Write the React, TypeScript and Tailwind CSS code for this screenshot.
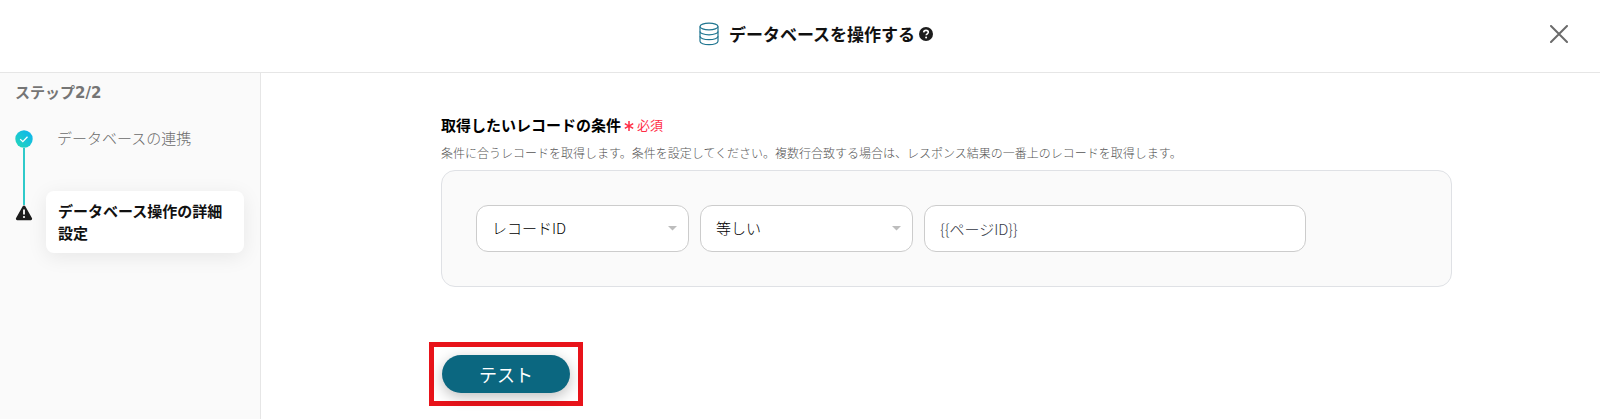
import { useState } from 'react'

const DatabaseIcon = () => (
  <svg width="20" height="24" viewBox="0 0 20 24" fill="none" stroke="#1f7590" strokeWidth="1.2" aria-hidden="true">
    <ellipse cx="10" cy="4.5" rx="9" ry="3.3" />
    <path d="M1 4.5v14.8c0 1.9 4 3.4 9 3.4s9-1.5 9-3.4V4.5" />
    <path d="M1 9.4c0 1.9 4 3.4 9 3.4s9-1.5 9-3.4" />
    <path d="M1 14.3c0 1.9 4 3.4 9 3.4s9-1.5 9-3.4" />
  </svg>
)

const HelpIcon = () => (
  <svg width="14" height="14" viewBox="0 0 14 14" aria-hidden="true">
    <circle cx="7" cy="7" r="7" fill="#1c1c1c" />
    <path d="M4.7 5.4c.1-1.3 1.1-2 2.3-2s2.3.7 2.3 1.9c0 1.5-2.1 1.5-2.1 3" fill="none" stroke="white" strokeWidth="1.6" />
    <circle cx="7.1" cy="10.5" r="1" fill="white" />
  </svg>
)

const CheckIcon = () => (
  <svg width="18" height="18" viewBox="0 0 18 18" aria-hidden="true">
    <defs>
      <linearGradient id="done" x1="0" y1="1" x2="1" y2="0">
        <stop offset="0" stopColor="#25d8b8" />
        <stop offset="1" stopColor="#0cb2f2" />
      </linearGradient>
    </defs>
    <circle cx="9" cy="9" r="8.7" fill="url(#done)" />
    <path d="M5.2 9.1l2.6 2.5 4.7-4.8" fill="none" stroke="white" strokeWidth="1.3" />
  </svg>
)

const WarningIcon = () => (
  <svg width="18" height="16" viewBox="0 0 18 16" aria-hidden="true">
    <path d="M7.7 1.2a1.5 1.5 0 012.6 0l6.6 11.9a1.4 1.4 0 01-1.2 2.1H2.3a1.4 1.4 0 01-1.2-2.1z" fill="#1c1c1c" />
    <path d="M9 4.6v4.9" stroke="white" strokeWidth="1.8" />
    <circle cx="9" cy="12" r="1.1" fill="white" />
  </svg>
)

const RequiredMark = () => (
  <svg width="10" height="12" viewBox="0 0 10 12" fill="none" stroke="#ff2d46" strokeWidth="1.5" aria-hidden="true">
    <path d="M5 2v10M0.8 4.6l8.4 4.8M9.2 4.6l-8.4 4.8" />
  </svg>
)

const SelectBox = ({ label, options }: { label: string; options: string[] }) => (
  <div className="relative w-[213px]">
    <select
      aria-label={label}
      className="w-full h-[47px] pl-[15px] pr-8 appearance-none bg-white border border-[#cccccc] rounded-xl text-[15px] text-black"
    >
      {options.map((o) => (
        <option key={o}>{o}</option>
      ))}
    </select>
    <svg className="absolute right-3 top-5 pointer-events-none" width="9" height="6" viewBox="0 0 9 6" aria-hidden="true">
      <path d="M0 1h9L4.5 5.5z" fill="#bdbdbd" />
    </svg>
  </div>
)

export default function App() {
  const [value, setValue] = useState('{{ページID}}')

  return (
    <div className="min-h-screen flex flex-col bg-white text-[#111111] font-['Noto_Sans_CJK_JP',sans-serif] font-light">
      {/* Header */}
      <header className="h-[73px] pb-1 pl-8 grid grid-cols-[1fr_auto_1fr] items-center border-b border-[#e6e6e6]">
        <div />
        <div className="flex items-center">
          <DatabaseIcon />
          <h1 className="ml-[10px] text-[17px] leading-6 font-bold">データベースを操作する</h1>
          <button aria-label="ヘルプ" className="ml-1">
            <HelpIcon />
          </button>
        </div>
        <button aria-label="閉じる" className="justify-self-end mr-8">
          <svg width="18" height="18" viewBox="0 0 18 18" fill="none" stroke="#6b6b6b" strokeWidth="2" strokeLinecap="round" aria-hidden="true">
            <path d="M1 1l16 16M17 1L1 17" />
          </svg>
        </button>
      </header>

      <div className="flex flex-1">
        {/* Steps */}
        <aside className="w-[261px] shrink-0 pl-[15px] pr-4 pt-2 bg-[#fafafa] border-r border-[#e6e6e6]">
          <p className="text-[15px] leading-[22px] font-bold text-[#757575]">
            ステップ<span className="font-['DejaVu_Sans',sans-serif]">2/2</span>
          </p>
          <ol className="mt-[22px] grid grid-cols-[18px_1fr] text-[15px] leading-[22px]">
            <li className="contents text-[#6b6b6b]">
              <div className="flex flex-col items-center pt-1">
                <CheckIcon />
                <div className="flex-1 w-[2px] bg-[#2fcaca]" />
              </div>
              <a href="#link" className="pl-6 pb-[42px] pt-px">データベースの連携</a>
            </li>
            <li className="contents font-bold">
              <div className="flex flex-col items-center">
                <div className="h-[14px] w-[2px] bg-[#2fcaca]" />
                <WarningIcon />
              </div>
              <a href="#detail" className="ml-[13px] py-[9px] px-3 bg-white rounded-lg shadow-[0_4px_20px_rgba(0,0,0,0.08)]">
                データベース操作の詳細設定
              </a>
            </li>
          </ol>
        </aside>

        {/* Form */}
        <main className="flex-1 min-w-0 pt-[41px] pl-[180px] pr-[148px]">
          <div className="flex items-center">
            <label htmlFor="condition" className="text-[15px] leading-[22px] font-bold text-black">取得したいレコードの条件</label>
            <span className="ml-[3px] flex items-center gap-[3px] text-[13px] leading-[22px] font-normal text-[#ff2d46]">
              <RequiredMark />
              必須
            </span>
          </div>
          <p className="mt-2 text-xs leading-[18px] text-[#555555]">
            条件に合うレコードを取得します。条件を設定してください。複数行合致する場合は、レスポンス結果の一番上のレコードを取得します。
          </p>
          <div className="mt-2 px-[34px] py-[34px] flex gap-[11px] bg-[#fafafa] border border-[#dfe1e5] rounded-[14px]">
            <SelectBox label="項目" options={['レコードID']} />
            <SelectBox label="比較" options={['等しい', '等しくない']} />
            <input
              id="condition"
              value={value}
              onChange={(e) => setValue(e.target.value)}
              className="flex-1 min-w-0 max-w-[382px] h-[47px] pl-[15px] pr-4 bg-white border border-[#cccccc] rounded-xl text-[15px] leading-[22px] text-[#333844]"
            />
          </div>
          <div className="mt-[55px] -ml-3 inline-block p-2 border-[5px] border-[#e8131a]">
            <button className="w-32 h-[38px] rounded-full bg-[#0b6780] text-lg leading-6 font-normal text-white shadow-[0_4px_14px_rgba(0,0,0,0.25)]">
              テスト
            </button>
          </div>
        </main>
      </div>
    </div>
  )
}
